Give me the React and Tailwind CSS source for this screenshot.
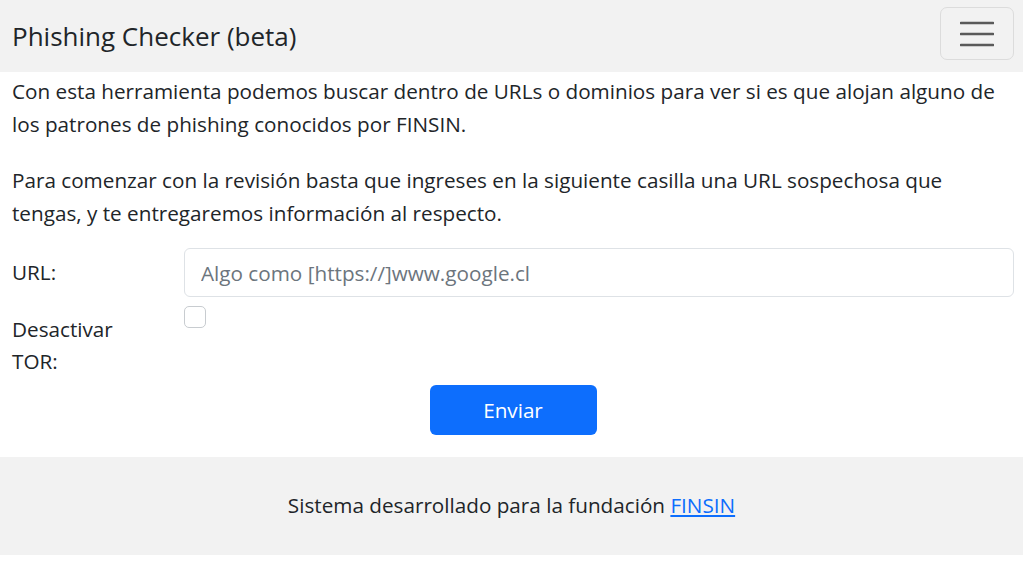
export default function App() {
  return (
    <div className="min-h-[582px] bg-white text-[#212529] font-['Open_Sans',sans-serif]">
      <nav className="h-[72px] bg-[#f2f2f2] flex items-center justify-between pl-3 pr-[9px]">
        <span className="text-[26px] leading-none">Phishing Checker (beta)</span>
        <button className="w-[74px] h-[53px] border border-[#dcdcdc] rounded-[7px] flex items-center justify-center -mt-[5px]">
          <svg width="34" height="26" viewBox="0 0 34 26">
            <path d="M1 2h32M1 13h32M1 24h32" stroke="#5a5a5a" strokeWidth="2.6" strokeLinecap="round" />
          </svg>
        </button>
      </nav>

      <main className="pl-3 pr-[9px] pt-[3px] text-[20.7px] leading-[33px]">
        <p className="mb-[23px]">
          Con esta herramienta podemos buscar dentro de URLs o dominios para ver si es que alojan alguno de los patrones de phishing conocidos por FINSIN.
        </p>
        <p className="mb-[18px]">
          Para comenzar con la revisión basta que ingreses en la siguiente casilla una URL sospechosa que tengas, y te entregaremos información al respecto.
        </p>

        <div className="flex items-center">
          <label className="w-[172px] shrink-0">URL:</label>
          <input
            className="flex-1 h-[49px] border border-[#dee2e6] rounded-[6px] px-4 text-[20.7px] placeholder-[#6c757d] outline-none"
            placeholder="Algo como [https://]www.google.cl"
          />
        </div>

        <div className="flex mt-[3px]">
          <label className="w-[172px] shrink-0 leading-[32px] pt-[13px]">
            Desactivar
            <br />
            TOR:
          </label>
          <div className="pt-[6px]">
            <div className="w-[22px] h-[22px] border border-[#c8ccd0] rounded-[5px] bg-white" />
          </div>
        </div>

        <div className="flex justify-center mt-[8px] pb-[22px]">
          <button className="w-[167px] h-[50px] bg-[#0d6efd] text-white rounded-[6px] text-[20.7px]">
            Enviar
          </button>
        </div>
      </main>

      <footer className="h-[98px] bg-[#f2f2f2] flex items-center justify-center text-[20.7px]">
        <span>
          Sistema desarrollado para la fundación{" "}
          <a href="#" className="text-[#0d6efd] underline">FINSIN</a>
        </span>
      </footer>
    </div>
  );
}
